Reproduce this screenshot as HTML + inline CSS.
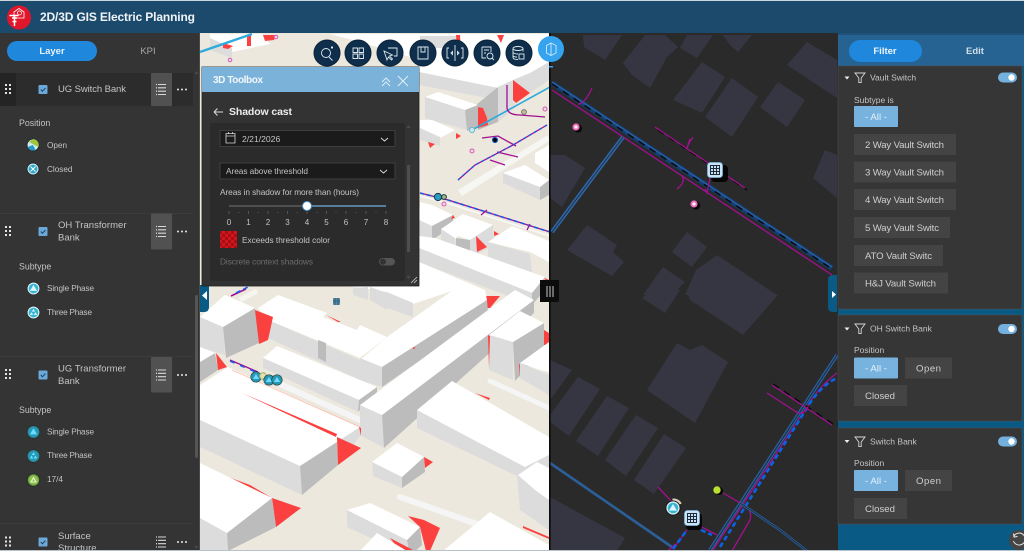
<!DOCTYPE html>
<html lang="en">
<head>
<meta charset="utf-8">
<title>2D/3D GIS Electric Planning</title>
<style>
html,body{margin:0;padding:0;width:1024px;height:551px;overflow:hidden;background:#343434}
svg{display:block;filter:blur(.35px)}
text{font-family:"Liberation Sans",sans-serif;fill:#c4c4c4;font-size:9px}
.t{fill:#fff}.f{fill:#dcdcdc}.r{fill:#bcbcbc}.red{fill:#fb4040}
.b{fill:#363642}
.mg{fill:none;stroke:#a3108f;stroke-width:1.3}
.bl{fill:none;stroke:#2c5f9a;stroke-width:1.6}
.ds{fill:none;stroke:#0a62e6;stroke-width:2.6;stroke-dasharray:5 3}
.blk{fill:none;stroke:#0c0c0c;stroke-width:1.6;stroke-dasharray:7 6}
.btn{fill:#444}
.btnt{font-size:9.6px;fill:#cfcfcf}
.ic{fill:none;stroke:#dfe8ef;stroke-width:.9}
</style>
</head>
<body>
<svg width="1024" height="551" viewBox="0 0 1024 551" xmlns="http://www.w3.org/2000/svg">
<defs>
<g id="grid"><rect x="-7.5" y="-7.5" width="15" height="15" rx="3" fill="#c8e4f6" stroke="#7fb4d8" stroke-width=".8"/><path d="M-4.5-4.5h9v9h-9zM-1.5-4.5v9M1.5-4.5v9M-4.5-1.5h9M-4.5 1.5h9" fill="none" stroke="#1e2a36" stroke-width="1"/></g>
<g id="list"><path d="M-3 -5h8M-3 -1.7h8M-3 1.7h8M-3 5h8" stroke="#d8d8d8" stroke-width="1.1" fill="none"/><path d="M-5-5h1M-5-1.7h1M-5 1.7h1M-5 5h1" stroke="#d8d8d8" stroke-width="1.3"/></g>
<g id="drag" fill="#e4e4e4"><rect x="-3" y="-5" width="2" height="2"/><rect x="1" y="-5" width="2" height="2"/><rect x="-3" y="-1" width="2" height="2"/><rect x="1" y="-1" width="2" height="2"/><rect x="-3" y="3" width="2" height="2"/><rect x="1" y="3" width="2" height="2"/></g>
<g id="more" fill="#e8e8e8"><circle cx="-4" cy="0" r="1"/><circle cx="0" cy="0" r="1"/><circle cx="4" cy="0" r="1"/></g>
<g id="chk"><rect x="-4.5" y="-4.5" width="9" height="9" rx="1" fill="#6aa9d9"/><path d="M-2.2 0l1.6 1.8 3-3.2" fill="none" stroke="#23415a" stroke-width="1"/></g>
<g id="tri1"><circle r="6.5" fill="#1c2224"/><circle r="6" fill="#d6eef2"/><circle r="4.8" fill="#35b4d2"/><path d="M0-3.6L3.6 2.4H-3.6Z" fill="#dff6ff"/></g>
<g id="tri3"><circle r="6.5" fill="#1c2224"/><circle r="6" fill="#d6eef2"/><circle r="4.8" fill="#35b4d2"/><path d="M0-3.6L1.6-1H-1.6ZM-2-.4L-.3 2.4H-3.6ZM2-.4L3.6 2.4H.3Z" fill="#e6f8ff"/></g>
<g id="tri4"><circle r="6.5" fill="#1c2224"/><circle r="6" fill="#2f8c97"/><circle r="4.6" fill="#229cc0"/><path d="M0-3.6L3.6 2.4H-3.6Z" fill="#6fdcff"/></g>
<g id="tri5"><circle r="6.5" fill="#1c2224"/><circle r="6" fill="#2f8c97"/><circle r="4.6" fill="#229cc0"/><path d="M0-3.6L1.6-1H-1.6ZM-2-.4L-.3 2.4H-3.6ZM2-.4L3.6 2.4H.3Z" fill="#7fe2ff"/></g>
<g id="tgl"><rect x="-9.5" y="-5" width="19" height="10" rx="5" fill="#74b1de"/><circle cx="4" cy="0" r="3.2" fill="#fff"/></g>
<g id="fun"><path d="M-5-4.5h10L1.2 .5v4.6H-1.2V.5Z" fill="none" stroke="#d8d8d8" stroke-width=".9"/></g>
<pattern id="chkr" width="6" height="6" patternUnits="userSpaceOnUse"><rect width="6" height="6" fill="#d0161c"/><rect width="3" height="3" fill="#a80f14"/><rect x="3" y="3" width="3" height="3" fill="#a80f14"/></pattern>
</defs>

<!-- base -->
<rect width="1024" height="551" fill="#343434"/>

<!-- LEFT 3D MAP -->
<rect x="200" y="33" width="350" height="518" fill="#ece8dd"/>
<!-- top buildings -->
<polygon class="t" points="210,34 262,34 270,44 232,52 210,42"/>
<polygon class="f" points="210,38 232,48 232,58 210,50"/>
<polygon class="red" points="247,35 251,35 251,46 247,46"/>
<polygon class="red" points="263,35 276,35 274,40 265,41"/>
<polygon class="red" points="223,43 233,46 228,49 223,48"/>
<polygon class="t" points="419,72 498,88 513,80 530,73 549,62 549,34 419,34"/>
<polygon class="f" points="419,72 498,88 498,100 419,85"/>
<polygon class="f" points="420,36 456,36 456,48 420,48"/>
<polygon class="t" points="330,34 420,34 420,60 360,42"/>
<polygon class="red" points="456,35 460,35 461,50 457,50"/>
<polygon class="red" points="497,35 504,35 501,43"/>
<polygon class="f" points="513,80 530,73 549,62 549,80 530,93"/>
<polygon class="r" points="476,105 498,87 498,122 478,130"/>
<polygon class="f" points="498,87 513,80 515,108 498,122"/>
<polygon class="red" points="513,80 530,93 516,103 513,100"/>
<polygon class="red" points="477,107 483,108 487,118 488,125 478,128"/>
<polygon class="t" points="425,97 438,92 478,105 465,110"/>
<polygon class="f" points="425,97 465,110 467,130 425,118"/>
<polygon class="r" points="465,110 478,105 478,126 467,131"/>
<polygon class="t" points="420,120 432,120 455,130 440,138 420,130"/>
<polygon class="f" points="420,128 440,137 440,146 420,140"/>
<polygon class="red" points="456,133 461,136 456,139"/>
<polygon class="red" points="428,142 435,144 430,148"/>
<polygon class="t" points="535,153 549,145 549,172 535,163"/>
<polygon class="f" points="503,173 540,187 540,200 503,183"/>
<polygon class="r" points="540,187 549,180 549,195 540,200"/>
<polygon class="t" points="503,173 525,165 549,180 540,187"/>
<polygon fill="#f6f6f3" points="458,190 548,135 549,141 462,196"/>
<line x1="472" y1="130" x2="550" y2="87" stroke="#2eaadc" stroke-width="1.6"/>
<line x1="200" y1="52" x2="252" y2="34" stroke="#2eaadc" stroke-width="2.4"/>
<path class="mg" d="M507 85V108Q508 115 520 115L545 117" stroke-width="1"/>
<path class="mg" d="M482 138L498 136L516 146M497 152L518 157M490 160L505 165" />
<circle cx="472" cy="130" r="2.6" fill="#c7e8ee" stroke="#6cb8c9"/>
<circle cx="524" cy="112" r="2.4" fill="#c6c08c" stroke="#777"/>
<circle cx="495" cy="140" r="2.6" fill="#06060c" stroke="#1868c8"/>
<circle cx="472" cy="151" r="2" fill="#f3d8e8" stroke="#d65cb2"/>
<circle cx="545" cy="109" r="2" fill="#f3d8e8" stroke="#d65cb2"/>
<circle cx="230" cy="60" r="1.8" fill="#f3d8e8" stroke="#d65cb2"/>
<circle cx="276" cy="37" r="1.8" fill="#f3d8e8" stroke="#d65cb2"/>
<path class="mg" d="M458 180L475 165L513 145L547 125" stroke-width="1.8"/>
<path d="M458 180L475 165L513 145L547 125" fill="none" stroke="#1c5ae6" stroke-width="1.4" stroke-dasharray="3 3"/>
<path class="mg" d="M420 193L448 200L550 232" stroke-width="1.8"/>
<path d="M420 193L448 200L550 232" fill="none" stroke="#1c5ae6" stroke-width="1.6" stroke-dasharray="4 3"/>
<path d="M420 196L450 204L550 236" fill="none" stroke="#f8f8f8" stroke-width="1.6"/>
<path class="mg" d="M487 210L481 215M530 224L527 230" stroke-width="1"/>
<circle cx="438" cy="197" r="3.6" fill="#2a9ec0" stroke="#10384a"/>
<circle cx="444" cy="197" r="2.4" fill="#9bb98a" stroke="#233"/>
<circle cx="444" cy="204" r="2" fill="#f3d8e8" stroke="#d65cb2"/>
<!-- mid right buildings -->
<polygon class="t" points="420,202 432,205 453,215 432,226 419,220"/>
<polygon class="f" points="419,220 432,226 432,240 419,236"/>
<polygon class="r" points="432,226 453,215 453,226 432,240"/>
<polygon class="red" points="453,215 455,218 451,219"/>
<polygon class="t" points="441,229 463,214 493,225 470,240 458,236 455,239"/>
<polygon class="f" points="441,229 455,238 456,249 441,242"/>
<polygon class="r" points="456,238 470,240 470,254 456,249"/>
<polygon class="f" points="470,240 493,225 494,245 477,254 470,254"/>
<polygon class="red" points="476,236 487,247 477,252"/>
<polygon class="red" points="494,231 499,234 494,236"/>
<polygon class="t" points="488,242 512,226 549,241 549,262 530,252"/>
<polygon class="f" points="488,242 530,254 533,280 488,258"/>
<polygon class="t" points="419,236 435,238 545,277 532,293 419,248"/>
<polygon class="f" points="419,248 532,293 532,305 419,262"/>
<polygon class="r" points="532,293 545,277 545,290 532,305"/>
<polygon class="red" points="545,278 549,280 546,283"/>

<!-- lower buildings -->
<polygon class="t" points="419,262 485,290 419,290"/>
<polygon class="t" points="350,286 419,286 455,290 413,304 387,292"/>
<polygon class="f" points="353,288 368,287 368,300 353,295"/>
<polygon class="f" points="370,287 387,293 387,310 370,300"/>
<polygon class="f" points="387,292 413,303 413,317 387,308"/>
<polygon class="red" points="485,296 500,296 490,308 486,308"/>
<polygon class="f" points="268,320 360,360 360,380 268,338"/>
<polygon class="t" points="258,308 278,295 327,313 323,317 357,330 360,325 387,337 360,358 268,320"/>
<polygon class="red" points="326,315 341,322 338,322"/>
<polygon class="r" points="318,340 326,343 326,362 318,358"/>
<polygon class="t" points="360,360 387,337 453,290 485,290 487,300 382,367"/>
<polygon class="f" points="360,358 382,367 382,387 360,380"/>
<polygon class="r" points="382,367 487,300 488,313 382,387"/>
<polygon class="red" points="413,347 416,348 413,349"/>
<polygon class="t" points="263,358 277,346 377,387 359,400"/>
<polygon class="f" points="263,358 359,400 358,412 263,368"/>
<polygon class="r" points="359,400 377,387 377,392 358,412"/>
<line x1="280" y1="384" x2="360" y2="420" stroke="#f5f5f5" stroke-width="6" stroke-linecap="round"/>
<line x1="490" y1="381" x2="549" y2="408" stroke="#f5f5f5" stroke-width="5" stroke-linecap="round"/>
<line x1="400" y1="497" x2="477" y2="524" stroke="#f5f5f5" stroke-width="6" stroke-linecap="round"/>

<polygon class="f" points="360,405 382,415 384,448 360,435"/>
<polygon class="r" points="382,415 534,300 534,313 384,448"/>
<polygon class="t" points="360,405 515,290 534,300 382,415"/>

<polygon class="f" points="417,410 525,467 525,480 417,428"/>
<polygon class="t" points="417,410 452,381 549,437 549,455 525,467"/>
<polygon class="f" points="525,467 549,455 549,475 525,480"/>
<polygon class="red" points="475,393 490,398 489,400"/>

<polygon class="f" points="489,335 513,342 513,380 489,370"/>
<polygon class="r" points="513,342 544,323 544,350 515,381"/>
<polygon class="t" points="489,335 520,311 544,323 513,342"/>
<polygon class="red" points="544,330 549,333 549,345 544,345"/>
<polygon class="red" points="488,335 490,336 489,368"/>
<polygon class="red" points="519,364 521,365 520,378"/>
<polygon class="f" points="520,363 549,375 549,395 520,378"/>
<polygon class="t" points="520,363 549,342 549,372 540,370"/>

<polygon class="f" points="372,462 402,477 402,488 373,476"/>
<polygon class="r" points="402,477 424,457 425,472 402,488"/>
<polygon class="t" points="372,462 397,443 424,457 402,477"/>
<polygon class="red" points="424,457 433,462 425,468"/>

<polygon class="f" points="517,477 537,462 549,468 549,530 520,510"/>
<polygon class="t" points="518,475 537,462 549,468 549,500 535,490"/>
<polygon class="t" points="443,551 490,512 549,545 549,551"/>
<polygon class="red" points="523,526 549,537 549,539 523,528"/>

<polygon class="f" points="347,510 407,540 410,556 347,527"/>
<polygon class="r" points="407,540 420,527 422,545 410,556"/>
<polygon class="t" points="347,510 370,503 420,527 407,540"/>
<polygon class="red" points="408,516 424,520 440,528 430,551 426,551 420,527"/>
<polygon class="red" points="390,538 415,551 400,551"/>
<polygon class="t" points="360,551 377,533 407,551"/>

<!-- left blocks -->
<polygon class="f" points="200,317 223,327 225,355 200,347"/>
<polygon class="r" points="223,327 255,308 259,343 226,358"/>
<polygon class="t" points="200,317 225,295 255,308 223,327"/>
<polygon class="red" points="255,310 273,317 268,340 259,344"/>
<polygon class="r" points="200,362 215,353 218,370 200,382"/>
<polygon class="t" points="200,347 215,353 200,362"/>
<polygon class="red" points="216,353 227,367 218,370"/>

<polygon class="f" points="200,420 300,466 302,495 200,447"/>
<polygon class="r" points="300,466 337,441 338,465 302,495"/>
<polygon class="f" points="337,441 360,427 360,436 338,465"/>
<polygon class="t" points="200,385 228,367 360,427 300,466 200,420"/>
<polygon class="red" points="337,437 361,448 338,465"/>
<polygon class="red" points="242,393 337,434 336,437"/>
<line x1="232" y1="370" x2="360" y2="427" stroke="#ffb8a8" stroke-width=".7"/>
<polygon class="red" points="359,427 361,428 361,436"/>
<polygon class="red" points="228,477 250,485 272,498 301,508 276,527 272,498"/>
<polygon class="f" points="200,513 227,533 228,551 200,551"/>
<polygon class="r" points="227,533 272,498 276,527 228,551"/>
<polygon class="t" points="200,463 272,498 227,533 200,518"/>
<path d="M230 360L258 372" stroke="#a3108f" stroke-width="1.4" fill="none"/>
<path d="M230 361L258 373" stroke="#1c5ae6" stroke-width="1.6" stroke-dasharray="5 6" fill="none"/>
<path d="M231 296L246 289" stroke="#a3108f" stroke-width="1.6" fill="none"/>
<path d="M236 293L248 287" stroke="#1c5ae6" stroke-width="1.6" stroke-dasharray="5 3" fill="none"/>
<line x1="240" y1="300" x2="257" y2="291" stroke="#f6f5f0" stroke-width="5"/>
<use href="#tri4" transform="translate(256 377) scale(.85)"/>
<circle cx="263" cy="376" r="3.3" fill="#e6e2a8" stroke="#a8a878"/>
<use href="#tri4" transform="translate(269 380) scale(.85)"/>
<use href="#tri4" transform="translate(277 380) scale(.85)"/>
<rect x="333" y="298" width="7" height="7" rx="1" fill="#4f88a8"/>
<path d="M335 298v7M338 298v7M333 301h7" stroke="#2b4a60" stroke-width=".6"/>

<!-- RIGHT DARK MAP -->
<rect x="550" y="33" width="288" height="518" fill="#2a2a2a"/>
<g class="b">
<polygon points="583,35 622,35 605,60 584,47"/>
<polygon points="665,35 678,47 667,57 650,88 632,75 623,63 645,35"/>
<polygon points="687,35 713,35 697,58 680,48"/>
<polygon points="723,35 752,35 738,52 730,45"/>
<polygon points="702,62 725,77 702,113 673,100"/>
<polygon points="732,78 758,97 732,137 705,117"/>
<polygon points="778,82 805,100 787,127 760,107"/>
<polygon points="807,42 837,60 837,98 787,65"/>
<polygon points="550,155 565,155 585,168 562,207 550,198"/>
<polygon points="587,225 617,245 613,252 624,262 612,276 567,250"/>
<polygon points="687,232 707,247 692,267 672,252"/>
<polygon points="663,267 685,282 672,295 643,295"/>
<polygon points="717,255 777,295 685,295 696,270"/>
<polygon points="825,150 837,155 837,198 813,178"/>
<polygon points="653,290 680,290 665,313 642,298"/>
<polygon points="687,290 778,295 743,335 690,300"/>
<polygon points="677,343 690,350 702,345 728,362 695,423 647,390"/>
<polygon points="550,360 572,370 550,400"/>
<polygon points="578,377 600,389 569,436 550,422 550,415"/>
<polygon points="607,396 629,408 598,456 576,441"/>
<polygon points="636,415 658,428 626,476 605,460"/>
<polygon points="664,434 686,448 654,494 634,480"/>
<polygon points="550,497 625,538 617,551 550,551"/>
</g>
<!-- main NW-SE line -->
<path d="M552 83L832 268" fill="none" stroke="#123f78" stroke-width="5"/>
<path d="M552 82L832 267" fill="none" stroke="#2c5f9a" stroke-width="1.4"/>
<path class="blk" d="M552 84L832 269"/>
<path class="mg" d="M552 90L832 275"/>
<path d="M623 137L590 181L552 232" fill="none" stroke="#2f66a6" stroke-width="4"/>
<path d="M623 137L590 181L552 232" fill="none" stroke="#1e2f44" stroke-width="1"/>
<path class="mg" d="M578 104Q584 105 592 88"/>
<path class="blk" d="M656 128L745 188" stroke-width="1.2" stroke-dasharray="none" transform="translate(2 2)"/>
<path class="mg" d="M655 127L745 188"/>
<path class="mg" d="M687 148Q690 140 692 139L693 137M687 148L690 139"/>
<path class="mg" d="M677 189Q686 182 682 176M705 189L707 193L710 178"/>
<g><circle cx="578" cy="128.500" r="4" fill="#060606"/><circle cx="576" cy="127" r="3.600" fill="#f06ab8"/><circle cx="576" cy="127" r="1.600" fill="#fff"/></g>
<g><circle cx="696" cy="205.500" r="4" fill="#060606"/><circle cx="694" cy="204" r="3.600" fill="#f06ab8"/><circle cx="694" cy="204" r="1.600" fill="#fff"/></g>
<rect x="711" y="165" width="17" height="17" rx="4" fill="#060606"/>
<use href="#grid" transform="translate(715 170)"/>
<!-- SE lines -->
<path d="M710 550L837 355" fill="none" stroke="#2c5f9a" stroke-width="3.6"/>
<path d="M710 550L837 355" fill="none" stroke="#1a2a3e" stroke-width="1"/>
<path class="mg" d="M713 550L807 407Q820 385 837 373"/>
<path class="ds" d="M720 547L810 403Q822 385 837 378" stroke-width="3" stroke-dasharray="6 5"/>
<path d="M550 463L672 547" fill="none" stroke="#2c5f9a" stroke-width="2.6"/>
<path class="blk" d="M773 387L833 427" stroke-width="1.2" stroke-dasharray="none" transform="translate(0 -3)"/>
<path class="mg" d="M772 385L832 425"/>
<path class="mg" d="M767 393L798 413Q804 414 808 407"/>
<path class="mg" d="M723 493L747 507Q752 512 750 520L732 551"/>
<path d="M740 503L780 530L807 551" fill="none" stroke="#2c5f9a" stroke-width="2.6"/>
<path d="M740 503L780 530L807 551" fill="none" stroke="#1a2a3e" stroke-width=".8"/>
<path class="mg" d="M658 487L672 502M698 525L717 535M673 549L687 530M667 551Q672 548 675 544"/>
<path class="ds" d="M673 549L687 530M701 530L712 535" stroke-width="2.600"/>
<circle cx="719" cy="491" r="4" fill="#060606"/>
<circle cx="717" cy="490" r="3.700" fill="#b9e02c"/>
<path d="M672.500 500a7 7 0 0 1 8 4" fill="none" stroke="#d9d0bb" stroke-width="2.500"/>
<circle cx="673" cy="508" r="7.500" fill="#111"/>
<use href="#tri1" transform="translate(673 508) scale(1.100)"/>
<rect x="686" y="513" width="16" height="17" rx="4" fill="#060606"/>
<use href="#grid" transform="translate(692 518)"/>

<!-- divider -->
<rect x="549" y="33" width="1.600" height="518" fill="#0a0a0a"/>
<rect x="540" y="280" width="19" height="22" fill="#0c0c0c"/>
<path d="M547 286v11M550 286v11M553 286v11" stroke="#c8c8c8" stroke-width="1"/>
<rect x="549" y="66" width="4" height="1.500" fill="#3aa0e8"/>

<!-- expand tabs -->
<path d="M200 285h9v22q0 5-5 5h-4z" fill="#0a5a86"/>
<path d="M207 291v9l-5-4.500z" fill="#fff"/>
<path d="M837 275h-4q-5 0-5 5v27q0 5 5 5h4z" fill="#0a5a86"/>
<path d="M832 291v7l4-3.500z" fill="#fff"/>

<!-- toolbar -->
<g fill="#0e2e4b" stroke="#0a2238">
<circle cx="327" cy="53" r="13"/><circle cx="358" cy="53" r="13"/><circle cx="390" cy="53" r="13"/><circle cx="423" cy="53" r="13"/><circle cx="455" cy="53" r="13"/><circle cx="487" cy="53" r="13"/><circle cx="519" cy="53" r="13"/>
</g>
<circle cx="551" cy="49" r="13" fill="#36a3ee"/>
<g class="ic">
<circle cx="326" cy="53" r="4.500"/><path d="M329 57l3.500 3.500M331 47.500h2M332 46v3"/>
<path d="M353 48h4.500v4.500h-4.500zM359 48h4.500v4.500H359zM353 54h4.500v4.500h-4.500zM359 54h4.500v4.500H359z"/>
<path d="M388 48h9v8h-3M384 51l3 9 1.500-3 3 3 1-1-3-3 3-1z"/>
<path d="M418 47h10v12h-10zM421 47v5h4v-5z"/>
<path d="M455 45v16M449 48h-2v10h2M461 48h2v10h-2M451 53l1.500-1.500v3zM459 53l-1.500-1.500v3z"/>
<path d="M482 47h9v5M482 47v11h4M484 50h5M484 53h2"/><circle cx="490" cy="56" r="3"/><path d="M492 58l2 2"/>
<ellipse cx="518" cy="48.500" rx="5" ry="2"/><path d="M513 48.500v9c0 1.200 2 2 5 2M523 48.500v3M513 52c0 1 2 2 5 2M513 55.500c0 1 2 1.500 4 1.500"/><rect x="519" y="54" width="5" height="5"/>
</g>
<path d="M551 43l5 2.500v7.500l-5 2.500-4.500-2.500v-7.500zM551 43v12.500" fill="none" stroke="#cfeaff" stroke-width=".9"/>

<!-- 3D toolbox -->
<rect x="202" y="67" width="217" height="219" fill="#333" stroke="#222" stroke-width=".8"/>
<rect x="202" y="67" width="217" height="25" fill="#7ab2da"/>
<text x="213" y="83" textLength="50" style="font-size:10px;font-weight:bold;fill:#f2f7fb">3D Toolbox</text>
<path d="M382 82l4-4 4 4M382 86l4-4 4 4M398 76l10 10M408 76l-10 10" fill="none" stroke="#e8f2f9" stroke-width=".9"/>
<path d="M214 112h9M214 112l3.500-3.500M214 112l3.500 3.500" fill="none" stroke="#ddd" stroke-width="1"/>
<text x="229" y="115" textLength="63" style="font-size:10.500px;font-weight:bold;fill:#ececec">Shadow cast</text>
<rect x="210" y="123" width="195" height="158" fill="#2b2b2b"/>
<rect x="220" y="130.500" width="175" height="16" fill="#1b1b1b" stroke="#4a4a4a" stroke-width=".7"/>
<path d="M226 133.500h9v9.500h-9zM226 136h9M228.500 132v2M232.500 132v2" fill="none" stroke="#d6d6d6" stroke-width=".8"/>
<text x="242" y="142" style="font-size:8.600px">2/21/2026</text>
<path d="M381 138l3.500 3 3.500-3" fill="none" stroke="#ddd" stroke-width=".9"/>
<rect x="220" y="163" width="175" height="16" fill="#1b1b1b" stroke="#4a4a4a" stroke-width=".7"/>
<text x="226" y="174" textLength="82" style="font-size:8.300px">Areas above threshold</text>
<path d="M380 170l3.500 3 3.500-3" fill="none" stroke="#ddd" stroke-width=".9"/>
<text x="220" y="195" textLength="139" style="font-size:8.300px">Areas in shadow for more than (hours)</text>
<line x1="229" y1="206" x2="307" y2="206" stroke="#666" stroke-width="1.200"/>
<line x1="307" y1="206" x2="386" y2="206" stroke="#6fb0de" stroke-width="1.200"/>
<circle cx="307" cy="206" r="4.500" fill="#fff" stroke="#4a93c8" stroke-width="1"/>
<path d="M229 211v3M239 212v1M248.500 211v3M258 212v1M268 211v3M278 212v1M287.500 211v3M297 212v1M307 211v3M317 212v1M326.500 211v3M336 212v1M346 211v3M356 212v1M366 211v3M376 212v1M386 211v3" stroke="#666" stroke-width=".7"/>
<g style="text-anchor:middle">
<text x="229" y="225" text-anchor="middle" style="font-size:8px">0</text>
<text x="248.500" y="225" text-anchor="middle" style="font-size:8px">1</text>
<text x="268" y="225" text-anchor="middle" style="font-size:8px">2</text>
<text x="287.500" y="225" text-anchor="middle" style="font-size:8px">3</text>
<text x="307" y="225" text-anchor="middle" style="font-size:8px">4</text>
<text x="326.500" y="225" text-anchor="middle" style="font-size:8px">5</text>
<text x="346" y="225" text-anchor="middle" style="font-size:8px">6</text>
<text x="366" y="225" text-anchor="middle" style="font-size:8px">7</text>
<text x="386" y="225" text-anchor="middle" style="font-size:8px">8</text>
</g>
<rect x="220" y="231" width="17" height="17" fill="url(#chkr)"/>
<text x="242" y="243" textLength="88" style="font-size:8.300px">Exceeds threshold color</text>
<text x="220" y="264.500" textLength="93" style="font-size:8.300px;fill:#6c6c6c">Discrete context shadows</text>
<rect x="379" y="258" width="16" height="7.500" rx="3.700" fill="#555"/>
<circle cx="383" cy="261.800" r="3" fill="#333"/>
<rect x="407" y="165" width="3" height="87" fill="#4e4e4e"/>
<path d="M408.500 125l2 3h-4zM408.500 279l2-3h-4z" fill="#4b4b4b"/>
<path d="M411 283l6-6M414 283l3-3" stroke="#ccc" stroke-width=".8"/>

<!-- header bar -->
<rect width="1024" height="33" fill="#1c4a6c"/>
<rect width="1024" height="1" fill="#cbd6dc"/>
<circle cx="19" cy="17.500" r="12" fill="#e2162b"/>
<path d="M14 18v-6l5-3.500 5 3.500v6z" fill="none" stroke="#fff" stroke-width=".8"/>
<circle cx="19.500" cy="13" r="2" fill="none" stroke="#fff" stroke-width=".8"/>
<path d="M9.500 15.500h9M12 18h5M14.500 15v11M12.500 21.500h4" fill="none" stroke="#fff" stroke-width="1.500"/>
<text x="40" y="21" textLength="155" style="font-size:12px;font-weight:bold;fill:#eef3f6">2D/3D GIS Electric Planning</text>

<!-- LEFT PANEL -->
<rect x="0" y="33" width="200" height="518" fill="#343434"/>
<rect x="199" y="33" width="1" height="518" fill="#4a4a4a"/>
<rect x="7" y="41" width="90" height="20" rx="10" fill="#1f88dc"/>
<text x="52" y="54" text-anchor="middle" style="font-size:9.500px;font-weight:bold;fill:#e8f3fb">Layer</text>
<text x="148" y="54" text-anchor="middle" style="font-size:9.500px;fill:#a9a9a9">KPI</text>

<rect x="0" y="73" width="193" height="33" fill="#2c2c2c"/>
<rect x="0" y="73" width="16" height="33" fill="#242424"/>
<use href="#drag" transform="translate(8 89)"/>
<use href="#chk" transform="translate(43 89.500)"/>
<text x="58" y="92" textLength="68" style="font-size:9.500px">UG Switch Bank</text>
<rect x="151" y="73" width="21" height="33" rx="1" fill="#515151"/>
<use href="#list" transform="translate(161 89.500)"/>
<use href="#more" transform="translate(182 89.500)"/>
<text x="19" y="126" style="font-size:8.800px">Position</text>
<circle cx="33" cy="145" r="6" fill="#cfeaf0" stroke="#1f2b2e"/>
<path d="M33 139a6 6 0 0 1 5.500 8L29 142z" fill="#9fc53a"/>
<path d="M33 145L27.500 147a6 6 0 0 0 8 3z" fill="#2698c6"/>
<text x="47" y="148" style="font-size:8.200px">Open</text>
<circle cx="33" cy="169" r="6" fill="#cfeaf0" stroke="#1f2b2e"/>
<circle cx="33" cy="169" r="4.400" fill="#2da8c8"/>
<path d="M30.500 166.500l5 5M35.500 166.500l-5 5" stroke="#fff" stroke-width="1"/>
<text x="47" y="172" style="font-size:8.200px">Closed</text>

<rect x="0" y="213" width="193" height="1" fill="#3c3c3c"/>
<use href="#drag" transform="translate(8 231)"/>
<use href="#chk" transform="translate(43 231.500)"/>
<text x="58" y="228" textLength="68.500" style="font-size:9.500px">OH Transformer</text>
<text x="58" y="240.500" style="font-size:9.500px">Bank</text>
<rect x="151" y="213.500" width="21" height="36" rx="1" fill="#515151"/>
<use href="#list" transform="translate(161 231.500)"/>
<use href="#more" transform="translate(182 231.500)"/>
<text x="19" y="269.500" style="font-size:8.800px">Subtype</text>
<use href="#tri1" transform="translate(33.500 288.500)"/>
<text x="47" y="291" textLength="47" style="font-size:8.200px">Single Phase</text>
<use href="#tri3" transform="translate(33.500 312.500)"/>
<text x="47" y="315" textLength="45" style="font-size:8.200px">Three Phase</text>

<rect x="0" y="356" width="193" height="1" fill="#3c3c3c"/>
<use href="#drag" transform="translate(8 374)"/>
<use href="#chk" transform="translate(43 375)"/>
<text x="58" y="371.500" textLength="68" style="font-size:9.500px">UG Transformer</text>
<text x="58" y="384" style="font-size:9.500px">Bank</text>
<rect x="151" y="357" width="21" height="35.500" rx="1" fill="#515151"/>
<use href="#list" transform="translate(161 375)"/>
<use href="#more" transform="translate(182 375)"/>
<text x="19" y="413" style="font-size:8.800px">Subtype</text>
<use href="#tri4" transform="translate(33.500 432)"/>
<text x="47" y="434.500" textLength="47" style="font-size:8.200px">Single Phase</text>
<use href="#tri5" transform="translate(33.500 456)"/>
<text x="47" y="458" textLength="45" style="font-size:8.200px">Three Phase</text>
<circle cx="33.500" cy="480" r="6.500" fill="#1c2224"/>
<circle cx="33.500" cy="480" r="5.800" fill="#6aa540"/>
<circle cx="33.500" cy="480" r="4.500" fill="#8fc14c"/>
<path d="M33.500 476.500L37 482.500H30ZM33.500 479L35 481.500H32Z" fill="#dff0c4" fill-rule="evenodd"/>
<text x="47" y="482" style="font-size:8.200px">17/4</text>

<rect x="0" y="523" width="193" height="1" fill="#3c3c3c"/>
<use href="#drag" transform="translate(8 541.500)"/>
<use href="#chk" transform="translate(43 542)"/>
<text x="58" y="539" style="font-size:9.500px">Surface</text>
<text x="58" y="551" style="font-size:9.500px">Structure</text>
<use href="#list" transform="translate(161 542)"/>
<use href="#more" transform="translate(182 542)"/>
<rect x="195" y="295" width="3" height="163" rx="1.500" fill="#555"/>
<path d="M196.500 71l2 3h-4zM196.500 549l2-3h-4z" fill="#4b4b4b"/>

<!-- RIGHT PANEL -->
<rect x="838" y="33" width="186" height="518" fill="#0a5a86"/>
<rect x="838" y="33" width="186" height="33" fill="#266392"/>
<rect x="838" y="33" width="186" height="2" fill="#1f507a"/>
<rect x="849" y="40" width="73" height="22" rx="11" fill="#1f88dc"/>
<text x="885" y="54" text-anchor="middle" style="font-size:9.500px;font-weight:bold;fill:#eef6fc">Filter</text>
<text x="975" y="54" text-anchor="middle" style="font-size:9.500px;font-weight:bold;fill:#d2dfe8">Edit</text>

<rect x="838" y="66" width="184" height="243" fill="#363636" stroke="#4d4d4d" stroke-width=".6"/>
<path d="M844.500 76.500h5l-2.500 3z" fill="#eee"/>
<use href="#fun" transform="translate(860 77.500)"/>
<text x="870" y="80.500" style="font-size:8.500px">Vault Switch</text>
<use href="#tgl" transform="translate(1007.500 77.500)"/>
<text x="854" y="103" style="font-size:8.500px">Subtype is</text>
<rect x="854" y="106" width="44" height="21" rx="1" fill="#78b2de"/>
<text x="865" y="120" textLength="22" class="btnt" style="fill:#e8f2f9">- All -</text>
<rect class="btn" x="854" y="134" width="102" height="21"/>
<text x="865" y="148" textLength="79" class="btnt">2 Way Vault Switch</text>
<rect class="btn" x="854" y="161.500" width="102" height="21"/>
<text x="865" y="175.500" textLength="79" class="btnt">3 Way Vault Switch</text>
<rect class="btn" x="854" y="189" width="102" height="21"/>
<text x="865" y="203" textLength="79" class="btnt">4 Way Vault Switch</text>
<rect class="btn" x="854" y="217" width="96" height="21"/>
<text x="865" y="231" textLength="74" class="btnt">5 Way Vault Switc</text>
<rect class="btn" x="854" y="245" width="89" height="21"/>
<text x="865" y="259" textLength="67" class="btnt">ATO Vault Switc</text>
<rect class="btn" x="854" y="272.500" width="94" height="21"/>
<text x="865" y="286.500" textLength="71" class="btnt">H&amp;J Vault Switch</text>

<rect x="838" y="315" width="184" height="106" fill="#363636" stroke="#4d4d4d" stroke-width=".6"/>
<path d="M844.500 327.500h5l-2.500 3z" fill="#eee"/>
<use href="#fun" transform="translate(860 328.500)"/>
<text x="870" y="331.500" style="font-size:8.500px">OH Switch Bank</text>
<use href="#tgl" transform="translate(1007.500 329)"/>
<text x="854" y="353" style="font-size:8.500px">Position</text>
<rect x="854" y="357.500" width="44" height="21" rx="1" fill="#78b2de"/>
<text x="865" y="371.500" textLength="22" class="btnt" style="fill:#e8f2f9">- All -</text>
<rect class="btn" x="905" y="357.500" width="47" height="21"/>
<text x="916" y="371.500" textLength="25" class="btnt">Open</text>
<rect class="btn" x="854" y="385" width="53" height="21"/>
<text x="865" y="399" textLength="30" class="btnt">Closed</text>

<rect x="838" y="428" width="184" height="96" fill="#363636" stroke="#4d4d4d" stroke-width=".6"/>
<path d="M844.500 440h5l-2.500 3z" fill="#eee"/>
<use href="#fun" transform="translate(860 441.500)"/>
<text x="870" y="444.500" style="font-size:8.500px">Switch Bank</text>
<use href="#tgl" transform="translate(1007.500 441.500)"/>
<text x="854" y="466" style="font-size:8.500px">Position</text>
<rect x="854" y="470" width="44" height="21" rx="1" fill="#78b2de"/>
<text x="865" y="484" textLength="22" class="btnt" style="fill:#e8f2f9">- All -</text>
<rect class="btn" x="905" y="470" width="47" height="21"/>
<text x="916" y="484" textLength="25" class="btnt">Open</text>
<rect class="btn" x="854" y="498" width="53" height="21"/>
<text x="865" y="512" textLength="30" class="btnt">Closed</text>

<circle cx="1019" cy="540" r="10" fill="#454545"/>
<path d="M1014 536a6 6 0 1 1-.500 5M1013.500 533.500l.500 3.500 3.500-.500" fill="none" stroke="#e6e6e6" stroke-width="1"/>
<rect y="550" width="1024" height="1" fill="#b8c2c8"/>
</svg>
</body>
</html>
